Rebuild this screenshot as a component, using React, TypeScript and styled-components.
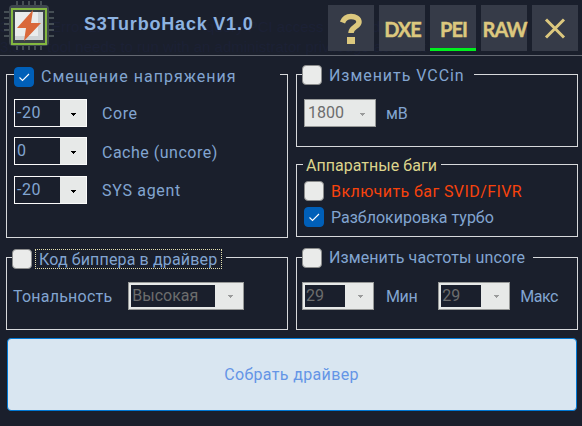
import React from 'react';
import styled, { createGlobalStyle } from 'styled-components';

const bg = '#1a1f2c';
const blue = '#82a5d1';
const gold = '#dcc87e';

const Global = createGlobalStyle`
  * { box-sizing: border-box; }
  body { margin: 0; background: ${bg}; overflow: hidden; }
`;

const Window = styled.div`
  width: 582px;
  height: 426px;
  background: ${bg};
  color: ${blue};
  font: 16px/20px Roboto, sans-serif;
  white-space: nowrap;
`;

const Header = styled.header`
  position: relative;
  display: flex;
  height: 56px;
  padding: 0 4px 0 3px;
  border-bottom: 1px solid #646872;
`;

const Ghost = styled.div<{ $x: number; $y: number }>`
  position: absolute;
  left: ${p => p.$x}px;
  top: ${p => p.$y}px;
  color: #1c2135;
  font: 15px/16px 'Liberation Sans', sans-serif;
  pointer-events: none;
`;

const Logo = styled.svg`
  position: relative;
  flex: none;
  width: 52px;
  height: 52px;
`;

const Title = styled.h1`
  position: relative;
  flex: 1;
  margin: 0;
  padding: 14px 0 0 29px;
  font: bold 18px/21px 'Liberation Sans', sans-serif;
  letter-spacing: 0.8px;
  color: #8db2e0;
`;

const Tools = styled.nav`
  position: relative;
  display: flex;
  gap: 5px;
  padding-top: 5px;
`;

const Tool = styled.button<{ $active?: boolean }>`
  display: flex;
  align-items: center;
  justify-content: center;
  width: 46px;
  height: 46px;
  padding: 1px 0 0;
  border: 0;
  background: #363b48;
  box-shadow: ${p => (p.$active ? 'inset 0 -3px #00f01e' : 'none')};
  color: ${gold};
  font: bold 20px/24px Lato, sans-serif;
  letter-spacing: -1px;
`;

const ToolText = styled.span`
  margin-left: 1px;
  -webkit-text-stroke: 0.4px ${gold};
`;

const Body = styled.main`
  display: grid;
  grid-template-columns: 282px 282px;
  column-gap: 8px;
  padding: 18px 0 0 6px;
`;

const Column = styled.div`
  display: flex;
  flex-direction: column;
`;

const Group = styled.section<{ $h: number; $mt?: number }>`
  height: ${p => p.$h}px;
  margin-top: ${p => p.$mt ?? 0}px;
  border: 1px solid #d7d9dc;
`;

const Legend = styled.div<{ $x: number; $w: number; $up: number; $h?: number }>`
  display: flex;
  align-items: center;
  width: ${p => p.$w}px;
  height: ${p => p.$h ?? 20}px;
  margin: -${p => p.$up}px 0 0 ${p => p.$x}px;
  background: ${bg};
`;

const Row = styled.div<{ $x: number; $mt: number; $h?: number }>`
  display: flex;
  align-items: center;
  height: ${p => p.$h ?? 28}px;
  margin: ${p => p.$mt}px 0 0 ${p => p.$x}px;
`;

const Text = styled.span<{ $x?: number; $ls?: number; $c?: string; $dy?: number }>`
  margin-left: ${p => p.$x ?? 0}px;
  padding-top: ${p => p.$dy ?? 0}px;
  letter-spacing: ${p => p.$ls ?? 0}px;
  color: ${p => p.$c ?? 'inherit'};
`;

const Box = styled.span<{ $on?: boolean }>`
  display: flex;
  flex: none;
  width: 20px;
  height: 20px;
  border: 1px solid ${p => (p.$on ? '#005fb8' : '#8b8c8c')};
  border-radius: 4px;
  background: ${p => (p.$on ? '#005fb8' : '#eaebea')};
`;

const FocusText = styled.span`
  display: flex;
  align-items: center;
  width: 187px;
  height: 20px;
  margin-left: 3px;
  padding-left: 3px;
  border: 1px dotted #e6e2b0;
`;

const Combo = styled.div<{ $w: number; $kind: 'on' | 'flat' | 'off'; $ml?: number }>`
  display: flex;
  flex: none;
  width: ${p => p.$w}px;
  height: 28px;
  margin-left: ${p => p.$ml ?? 0}px;
  padding: ${p => (p.$kind === 'off' ? '2px' : '0')};
  border: 1px solid ${p => (p.$kind === 'on' ? '#fbfbfb' : '#979998')};
  background: #e7e9e8;
`;

const Value = styled.span<{ $kind: 'on' | 'flat' | 'off'; $ls?: number }>`
  flex: 1;
  padding-left: ${p => ({ on: 2, flat: 3, off: 1 })[p.$kind]}px;
  padding-top: ${p => (p.$kind === 'off' ? 1 : 3)}px;
  letter-spacing: ${p => p.$ls ?? 0}px;
  background: ${p => (p.$kind === 'flat' ? 'transparent' : bg)};
  color: ${p => (p.$kind === 'on' ? blue : '#6c6d6d')};
`;

const Arrow = styled.svg<{ $kind: 'on' | 'flat' | 'off' }>`
  flex: none;
  width: 26px;
  height: ${p => (p.$kind === 'off' ? 22 : 26)}px;
  color: ${p => (p.$kind === 'on' ? '#000' : '#9a9b9b')};
`;

const Build = styled.button`
  display: block;
  width: 570px;
  height: 73px;
  margin: 8px 0 0 7px;
  padding: 0 1px 0 0;
  border: 1px solid #0078d4;
  border-radius: 4px;
  background: #d9e6f1;
  color: #6495e6;
  font: 16px/20px Roboto, sans-serif;
  letter-spacing: 0.35px;
`;

function Check({ on }: { on?: boolean }) {
  return (
    <Box $on={on}>
      {on && (
        <svg width="18" height="18" viewBox="0 0 18 18">
          <path d="M4.5 9.5 7.5 12.5 14 6" fill="none" stroke="#fff" strokeWidth="1.1" />
        </svg>
      )}
    </Box>
  );
}

function Select({ value, w, kind = 'on', ml, ls }: { value: string; w: number; kind?: 'on' | 'flat' | 'off'; ml?: number; ls?: number }) {
  const top = kind === 'off' ? 10 : 13;
  const left = kind === 'off' ? 13 : 11;
  return (
    <Combo $w={w} $kind={kind} $ml={ml}>
      <Value $kind={kind} $ls={ls}>{value}</Value>
      <Arrow $kind={kind} shapeRendering="crispEdges">
        <path d={`M${left} ${top}h5v1h-1v1h-1v1h-1v-1h-1v-1h-1z`} fill="currentColor" />
      </Arrow>
    </Combo>
  );
}

const pins = [12, 18, 24, 30, 36];

export default function App() {
  return (
    <Window>
      <Global />
      <Header>
        <Ghost $x={0} $y={19}>3:57</Ghost>
        <Ghost $x={51} $y={19}>Error 2:</Ghost>
        <Ghost $x={206} $y={19}>query PCI access for windo</Ghost>
        <Ghost $x={0} $y={39}>3:57</Ghost>
        <Ghost $x={47} $y={39}>tool needs to run with an administrator priviledge account</Ghost>
        <Logo viewBox="0 0 52 52">
          {pins.map(p => (
            <path key={p} d={`M${p + 2} 1v5M${p + 2} 45v5M1 ${p}h6M45 ${p}h6`} stroke="#454e54" strokeWidth="2" />
          ))}
          <rect x="6" y="5" width="40" height="41" rx="4" fill="#3f484e" />
          <rect x="9" y="9" width="34" height="35" fill="#3b4346" stroke="#84b840" strokeWidth="2" />
          <path d="M12 12h28v28H12z" fill="#e9ecec" />
          <path d="M35 12h5v28H12v-4h23z" fill="#cfd4d6" />
          <path d="M30 10 14 28h9l-2 13 17-18h-10z" fill="#d9683a" />
        </Logo>
        <Title>S3TurboHack V1.0</Title>
        <Tools>
          <Tool aria-label="Help">
            <svg width="24" height="32" viewBox="0 0 24 32">
              <path d="M3.500 9.500C5 5.500 8 3.500 12 3.500c4.500 0 8 2 8 5.500 0 4.500-8 5-8 11" fill="none" stroke={gold} strokeWidth="5.500" />
              <path d="M8 24h8v7H8z" fill={gold} />
            </svg>
          </Tool>
          <Tool><ToolText>DXE</ToolText></Tool>
          <Tool $active><ToolText>PEI</ToolText></Tool>
          <Tool><ToolText>RAW</ToolText></Tool>
          <Tool aria-label="Close">
            <svg width="22" height="22" viewBox="0 0 22 22">
              <path d="m2 1.500 18 18M20 1.500l-18 18" stroke={gold} strokeWidth="3" />
            </svg>
          </Tool>
        </Tools>
      </Header>
      <Body>
        <Column>
          <Group $h={164}>
            <Legend $x={7} $w={266} $up={8}>
              <Check on />
              <Text $x={7} $ls={1.02}>Смещение напряжения</Text>
            </Legend>
            <Row $x={7} $mt={12}>
              <Select value="-20" w={73} ls={0.5} />
              <Text $x={15} $dy={2} $ls={0.6}>Core</Text>
            </Row>
            <Row $x={7} $mt={10}>
              <Select value="0" w={73} />
              <Text $x={15} $dy={4} $ls={0.5}>Cache (uncore)</Text>
            </Row>
            <Row $x={7} $mt={11}>
              <Select value="-20" w={73} ls={0.5} />
              <Text $x={15} $dy={2} $ls={0.7}>SYS agent</Text>
            </Row>
          </Group>
          <Group $h={73} $mt={19}>
            <Legend $x={5} $w={214} $up={9}>
              <Check />
              <FocusText><Text $ls={0.15} $dy={1}>Код биппера в драйвер</Text></FocusText>
            </Legend>
            <Row $x={5} $mt={13}>
              <Text $x={1} $ls={0.22} $dy={1}>Тональность</Text>
              <Select value="Высокая" w={116} kind="off" ml={16} />
            </Row>
          </Group>
        </Column>
        <Column>
          <Group $h={73}>
            <Legend $x={5} $w={172} $up={10}>
              <Check />
              <Text $x={7} $ls={0.95} $dy={1}>Изменить VCCin</Text>
            </Legend>
            <Row $x={7} $mt={14}>
              <Select value="1800" w={72} kind="flat" />
              <Text $x={10} $dy={2}>мВ</Text>
            </Row>
          </Group>
          <Group $h={73} $mt={17}>
            <Legend $x={6} $w={138} $up={9} $h={18}>
              <Text $x={3} $c="#ddd58c" $ls={0.03} $dy={2}>Аппаратные баги</Text>
            </Legend>
            <Row $x={7} $mt={7} $h={20}>
              <Check />
              <Text $x={7} $c="#f8430c" $ls={0.42} $dy={2}>Включить баг SVID/FIVR</Text>
            </Row>
            <Row $x={7} $mt={6} $h={20}>
              <Check on />
              <Text $x={7} $dy={2}>Разблокировка турбо</Text>
            </Row>
          </Group>
          <Group $h={73} $mt={20}>
            <Legend $x={5} $w={231} $up={10}>
              <Check />
              <Text $x={7} $ls={0.1}>Изменить частоты uncore</Text>
            </Legend>
            <Row $x={5} $mt={14}>
              <Select value="29" w={72} kind="off" />
              <Text $x={12} $ls={-0.4} $dy={1}>Мин</Text>
              <Select value="29" w={72} kind="off" ml={21} />
              <Text $x={10} $ls={-0.5} $dy={1}>Макс</Text>
            </Row>
          </Group>
        </Column>
      </Body>
      <Build>Собрать драйвер</Build>
    </Window>
  );
}
